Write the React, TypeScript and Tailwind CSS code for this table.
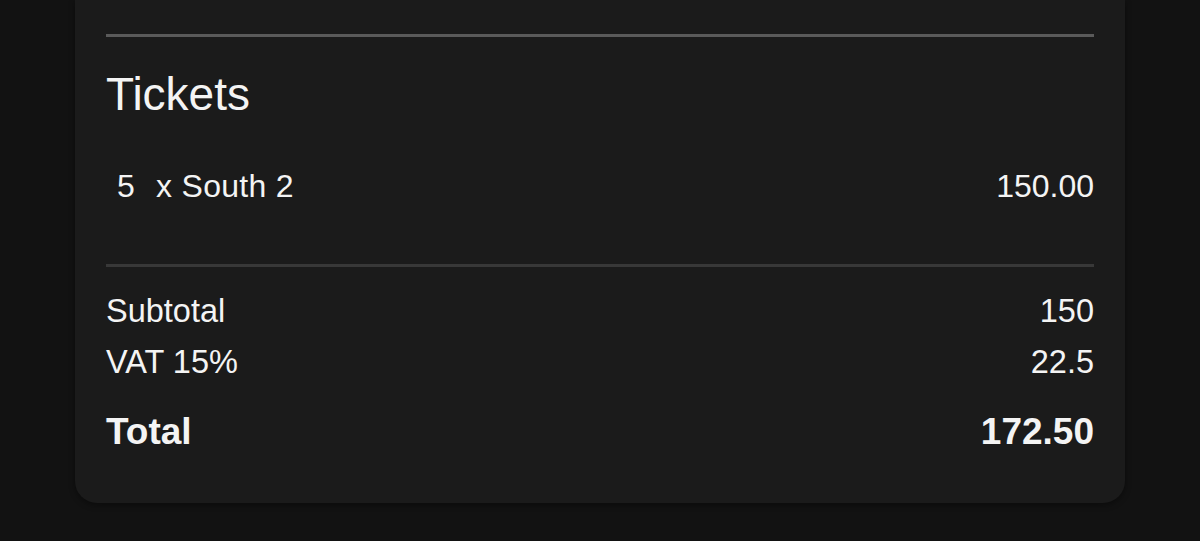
import React from 'react';

const font = { fontFamily: '"Liberation Sans", Arial, sans-serif' };

function Row({ label, value, bold }: { label: string; value: string; bold?: boolean }) {
  return (
    <div
      className={`flex items-center justify-between ${
        bold ? 'text-[37px] leading-[42px] font-bold' : 'text-[32.5px] leading-[38px]'
      }`}
    >
      <span>{label}</span>
      <span>{value}</span>
    </div>
  );
}

export default function App() {
  return (
    <div className="h-[541px] w-[1200px] overflow-hidden bg-[#121212] text-[#f4f4f4]" style={font}>
      <div className="ml-[75px] w-[1050px] rounded-b-[22px] bg-[#1b1b1b] px-[31px] pt-[34px] pb-[50px] shadow-[0_2px_6px_rgba(0,0,0,0.4)]">
        <div className="h-[3px] bg-[#5a5a5a]" />

        <h2 className="mt-[31px] text-[46px] leading-[52px] font-normal">Tickets</h2>

        <div className="mt-[48px] flex items-center justify-between text-[32px] leading-[36px]">
          <div className="flex items-center">
            <span className="ml-[11px] w-[39px]">5</span>
            <span className="tracking-[0.3px]">x South 2</span>
          </div>
          <span>150.00</span>
        </div>

        <div className="mt-[60px] h-[3px] bg-[#383838]" />

        <div className="mt-[25px]">
          <Row label="Subtotal" value="150" />
          <div className="mt-[13px]">
            <Row label="VAT 15%" value="22.5" />
          </div>
          <div className="mt-[30px]">
            <Row label="Total" value="172.50" bold />
          </div>
        </div>
      </div>
    </div>
  );
}
